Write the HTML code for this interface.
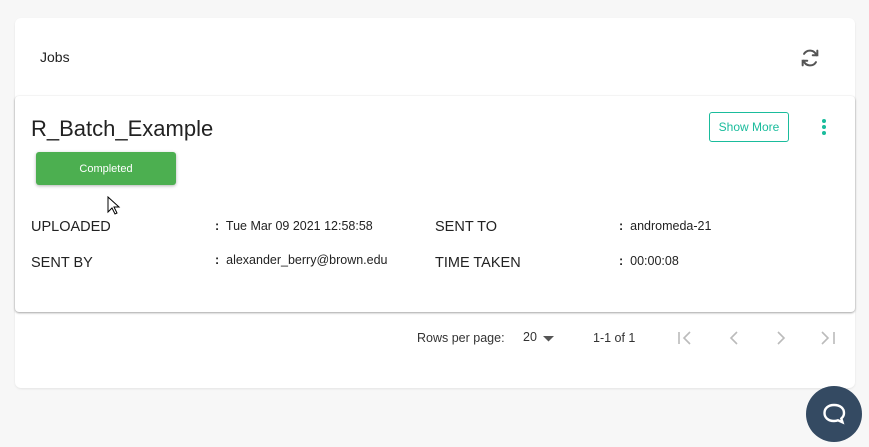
<!DOCTYPE html>
<html><head><style>
body{margin:0;width:869px;height:447px;background:#f7f7f7;font-family:"Liberation Sans",sans-serif;position:relative;overflow:hidden;color:#222}
.outer{position:absolute;left:15px;top:18px;width:840px;height:370px;background:#fff;border-radius:6px;box-shadow:0 1px 2px rgba(0,0,0,.08)}
.inner{position:absolute;left:15px;top:96px;width:840px;height:216px;background:#fff;border-radius:4px;box-shadow:0 1px 2px rgba(0,0,0,.35),0 0 2px rgba(0,0,0,.05)}
.abs{position:absolute;white-space:nowrap}
.lbl{font-size:14.5px;color:#222}
.val{font-size:12.5px;color:#222}
.pg{font-size:12.5px;color:#333}
</style></head><body>
<div class="outer"></div>
<div class="abs" style="left:40px;top:49px;font-size:14px">Jobs</div>
<svg class="abs" style="left:799px;top:47px" width="22" height="22" viewBox="0 0 24 24" fill="none" stroke="#555" stroke-width="2.2" stroke-linecap="round"><path d="M19 9a7.5 7.5 0 0 0-13.5-1.5"/><path d="M5 15a7.5 7.5 0 0 0 13.5 1.5"/><path d="M20 4v5h-5" /><path d="M4 20v-5h5"/></svg>
<div class="inner"></div>
<div class="abs" style="left:31px;top:116px;font-size:22px;color:#222">R_Batch_Example</div>
<div class="abs" style="left:36px;top:152px;width:140px;height:33px;background:#4caf50;border-radius:3px;box-shadow:0 1px 3px rgba(0,0,0,.3);color:#fff;font-size:11px;text-align:center;line-height:34px">Completed</div>
<div class="abs" style="left:709px;top:112px;width:78px;height:28px;border:1px solid #1abc9c;border-radius:3px;color:#1abc9c;font-size:12px;text-align:center;line-height:29px">Show More</div>
<svg class="abs" style="left:820px;top:118px" width="8" height="18"><circle cx="4" cy="3" r="2" fill="#1abc9c"/><circle cx="4" cy="9" r="2" fill="#1abc9c"/><circle cx="4" cy="15" r="2" fill="#1abc9c"/></svg>
<svg class="abs" style="left:107px;top:196px" width="14" height="20" viewBox="0 0 14 20"><path d="M1 1v15l4-4 3 6 2-1-3-6h5z" fill="#fff" stroke="#000" stroke-width="1"/></svg>
<div class="abs lbl" style="left:31px;top:219px">UPLOADED</div>
<div class="abs lbl" style="left:31px;top:255px">SENT BY</div>
<div class="abs lbl" style="left:435px;top:219px">SENT TO</div>
<div class="abs lbl" style="left:435px;top:255px">TIME TAKEN</div>
<div class="abs val" style="left:215px;top:219px"><b>:</b>&nbsp; Tue Mar 09 2021 12:58:58</div>
<div class="abs val" style="left:215px;top:253px"><b>:</b>&nbsp; alexander_berry@brown.edu</div>
<div class="abs val" style="left:619px;top:219px"><b>:</b>&nbsp; andromeda-21</div>
<div class="abs val" style="left:619px;top:254px"><b>:</b>&nbsp; 00:00:08</div>
<div class="abs pg" style="left:417px;top:331px">Rows per page:</div>
<div class="abs pg" style="left:523px;top:330px">20</div>
<svg class="abs" style="left:543px;top:336px" width="12" height="6"><path d="M0 0h11l-5.5 5.5z" fill="#555"/></svg>
<div class="abs pg" style="left:593px;top:331px">1-1 of 1</div>
<svg class="abs" style="left:676px;top:329px" width="170" height="18" fill="none" stroke="#bbb" stroke-width="1.6"><path d="M3 3v12M14 3l-6 6 6 6"/><path d="M61 3l-6 6 6 6"/><path d="M102 3l6 6-6 6"/><path d="M146 3l6 6-6 6M158 3v12"/></svg>
<div class="abs" style="left:806px;top:386px;width:56px;height:56px;border-radius:50%;background:#344a62"></div>
<svg class="abs" style="left:820px;top:400px" width="28" height="28" viewBox="0 0 28 28" fill="none" stroke="#fff" stroke-width="2.4"><path d="M14 5c-6 0-9.5 3.5-9.5 8s3.5 8 9.5 8c1.5 0 3-.3 4-.7l4.5 2-1.2-3.8c1.7-1.4 2.7-3.3 2.7-5.5 0-4.5-3.5-8-10-8z"/></svg>
</body></html>
